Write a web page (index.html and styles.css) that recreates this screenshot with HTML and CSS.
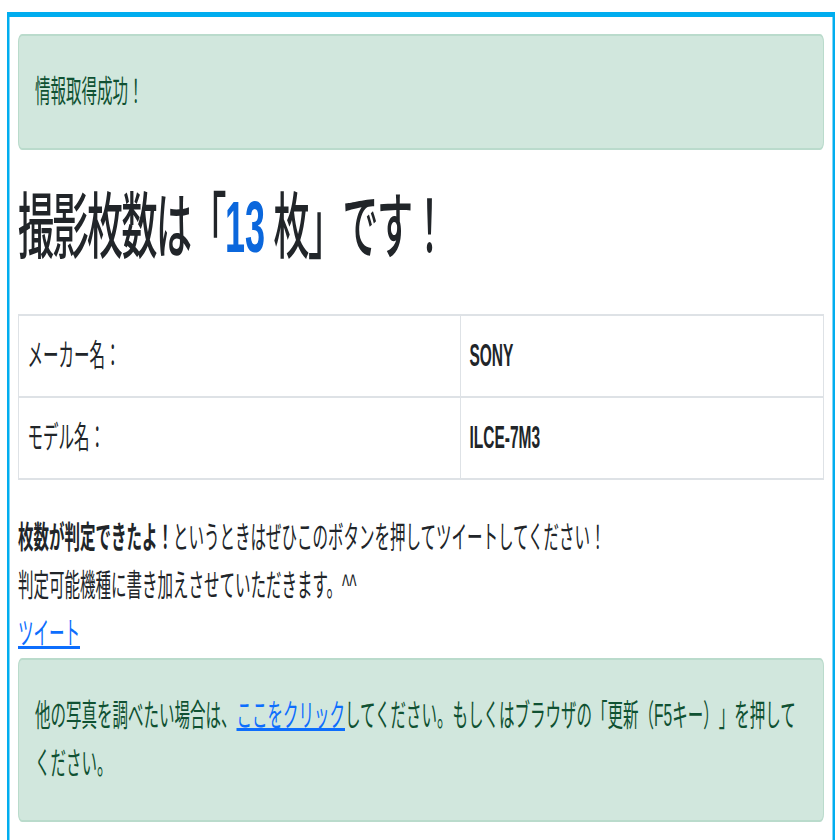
FILE: index.html
```html
<!DOCTYPE html>
<html lang="ja">
<head>
<meta charset="utf-8">
<title>撮影枚数</title>
<link rel="stylesheet" href="styles.css">
</head>
<body>
<div class="page">
  <div class="frame">
    <div class="alert">情報取得成功！</div>
    <h1 class="title">撮影枚数は「<span class="count">13</span> 枚」です！</h1>
    <table class="info">
      <tr><td class="label">メーカー名：</td><td class="value">SONY</td></tr>
      <tr><td class="label">モデル名：</td><td class="value">ILCE-7M3</td></tr>
    </table>
    <p class="note"><strong>枚数が判定できたよ！</strong>というときはぜひこのボタンを押してツイートしてください！<br>判定可能機種に書き加えさせていただきます。^^</p>
    <div class="tweet"><a href="#" class="link">ツイート</a></div>
    <div class="alert">他の写真を調べたい場合は、<a href="#" class="link">ここをクリック</a>してください。もしくはブラウザの「更新（F5キー）」を押してください。</div>
  </div>
</div>
</body>
</html>
```

FILE: styles.css
```css
html {
  overflow-x: hidden;
}

body {
  margin: 0;
  font-family: "Liberation Sans", "Noto Sans CJK JP", sans-serif;
  font-size: 31px;
  line-height: 48px;
  color: #212529;
  background: #fff;
  text-spacing-trim: space-all;
}

.page {
  width: 1680px;
  transform: scaleX(0.5);
  transform-origin: 0 0;
}

.frame {
  margin: 12px 10px 0 14px;
  border: 5px solid #00adef;
  padding: 17px 17px 80px;
}

.alert {
  background: #d1e7dd;
  border: 2px solid #badbcc;
  border-radius: 8px;
  color: #0f5132;
  padding: 32px 32px;
}

.title {
  margin: 31px 0 41px;
  font-size: 72px;
  line-height: 92px;
  font-weight: 500;
  letter-spacing: -3px;
}

.count {
  color: #0b67dc;
  font-weight: 700;
  letter-spacing: 0;
}

.info {
  width: 100%;
  border-collapse: collapse;
  margin-bottom: 34px;
}

.info td {
  border: 2px solid #dee2e6;
  padding: 16px 17px;
}

.info .label {
  width: 54.9%;
}

.info .value {
  font-weight: 700;
}

.note {
  margin: 0;
}

.note strong {
  font-weight: 700;
}

.tweet {
  line-height: 48px;
}

.link {
  color: #0d6efd;
  text-decoration: underline;
}
```
